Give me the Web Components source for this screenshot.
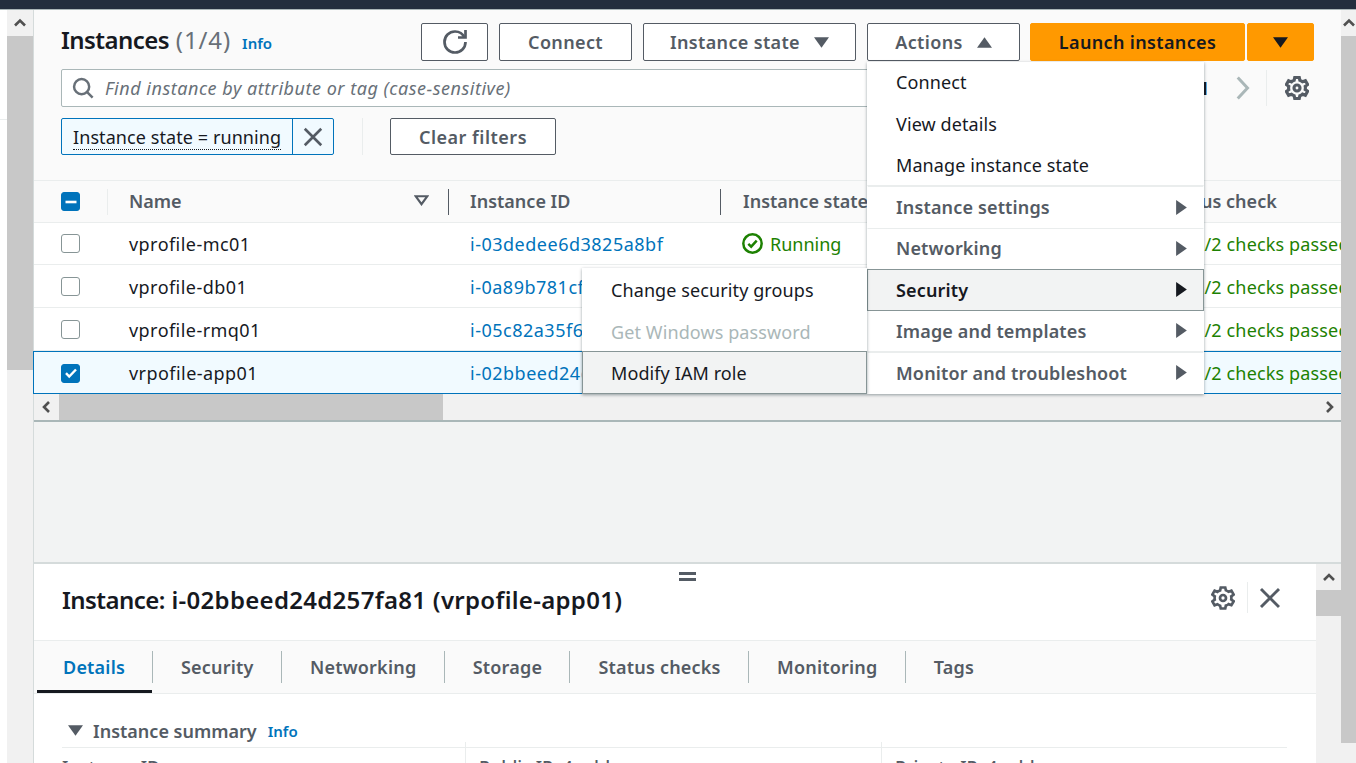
<!DOCTYPE html>
<html><head><meta charset="utf-8">
<style>
html,body{margin:0;padding:0;height:763px;overflow:hidden;background:#fff;font-family:"Noto Sans","Open Sans",sans-serif;color:#16191f}
</style></head>
<body>
<ec2-console></ec2-console>
<script>
const ICONS={
 refresh:'<path d="M10 5h5V0"/><path d="M15 8a6.96 6.96 0 0 1-7 7 6.96 6.96 0 0 1-7-7 6.96 6.96 0 0 1 7-7 6.87 6.87 0 0 1 6.3 4"/>',
 search:'<circle cx="7" cy="7" r="5.5"/><path d="m11 11 4 4"/>',
 close:'<path d="m2 2 12 12M14 2 2 14"/>',
 gear:'<path d="M13.6 8c0-.4 0-.7-.1-1.1l1.6-1.2-1.5-2.6-1.9.7c-.5-.4-1.1-.8-1.8-1L9.5 1h-3l-.4 1.9c-.7.2-1.3.5-1.8 1L2.4 3.1.9 5.7l1.6 1.2c-.1.4-.1.7-.1 1.1s0 .7.1 1.1L.9 10.3l1.5 2.6 1.9-.7c.5.4 1.1.8 1.8 1l.4 1.8h3l.4-1.9c.7-.2 1.3-.5 1.8-1l1.9.7 1.5-2.6-1.6-1.2c.1-.4.1-.7.1-1.1Z"/><circle cx="8" cy="8" r="2"/>',
 ok:'<circle cx="8" cy="8" r="7"/><path d="m4.8 8.2 2.2 2.2 4.2-4.6"/>',
 right:'<path d="m4.5 1 6.5 7-6.5 7"/>'
};
class Ec2Icon extends HTMLElement{
 connectedCallback(){
  const s=this.getAttribute('size')||16, w=this.getAttribute('stroke')||2, n=this.getAttribute('name');
  this.attachShadow({mode:'open'}).innerHTML=`<style>:host{display:inline-flex;flex:none;color:inherit}svg{display:block;fill:none;stroke:currentColor;stroke-width:${w}}</style><svg width="${s}" height="${s}" viewBox="0 0 16 16">${ICONS[n]}</svg>`;
 }
}
customElements.define('ec2-icon',Ec2Icon);

class Ec2Caret extends HTMLElement{
 connectedCallback(){
  const d=this.getAttribute('dir')||'down';
  const p={down:'M0 0h14L7 10z',up:'M0 10h14L7 0z',right:'M0 0l10 7-10 7z',hollow:'M1.5 1h11L7 8.5z'}[d];
  const vb=d==='right'?'0 0 10 14':'0 0 14 10';
  const wd=d==='right'?11:15,h=d==='right'?15:11;
  const paint=d==='hollow'?'fill:none;stroke:currentColor;stroke-width:2':'fill:currentColor';
  this.attachShadow({mode:'open'}).innerHTML=`<style>:host{display:inline-flex;flex:none}path{${paint}}</style><svg width="${wd}" height="${h}" viewBox="${vb}" style="display:block"><path d="${p}"/></svg>`;
 }
}
customElements.define('ec2-caret',Ec2Caret);

class Ec2Button extends HTMLElement{
 connectedCallback(){
  this.attachShadow({mode:'open'}).innerHTML=`<style>
  :host{display:inline-flex;box-sizing:border-box;height:38px;align-items:center;justify-content:center;gap:14px;border:1px solid #545b64;border-radius:2px;background:#fff;color:#545b64;font-size:18px;font-weight:600;letter-spacing:.35px;white-space:nowrap}
  :host([primary]){background:#f90;border-color:#f90;color:#16191f}
  </style><slot></slot>`;
 }
}
customElements.define('ec2-button',Ec2Button);

class Ec2Menu extends HTMLElement{
 connectedCallback(){
  this.attachShadow({mode:'open'}).innerHTML=`<style>
  :host{display:flex;flex-direction:column;position:absolute;box-sizing:border-box;background:#fff;box-shadow:0 1px 3px rgba(0,28,36,.4);z-index:5}
  </style><slot></slot>`;
 }
}
customElements.define('ec2-menu',Ec2Menu);

class Ec2MenuItem extends HTMLElement{
 connectedCallback(){
  this.attachShadow({mode:'open'}).innerHTML=`<style>
  :host{flex:1 1 0;display:flex;align-items:center;justify-content:space-between;box-sizing:border-box;padding:0 16px 0 28px;font-size:18px;letter-spacing:.1px;color:#16191f;border:1px solid transparent;border-top-color:var(--sep,transparent);margin-top:-1px;white-space:nowrap}
  :host(:first-child){margin-top:0}
  :host([group]){font-weight:600;letter-spacing:.15px;color:#545b64;--sep:#eaeded}
  :host([thick]){border-top:2px solid #eaeded}
  :host([sel]){background:#f2f3f3;color:#16191f;border:1px solid #879596;z-index:1}
  :host([dis]){color:#aab7b8}
  span{margin-bottom:var(--pb,1px)}
  </style><span><slot></slot></span><slot name="end"></slot>`;
 }
}
customElements.define('ec2-menu-item',Ec2MenuItem);

class Ec2Check extends HTMLElement{
 connectedCallback(){
  const st=this.getAttribute('state');
  let inner='';
  if(st==='on')inner='<svg width="16" height="16" viewBox="0 0 16 16"><path d="m3 8.2 3.2 3.3L13 4.5" fill="none" stroke="#fff" stroke-width="2.4"/></svg>';
  if(st==='mixed')inner='<svg width="16" height="16" viewBox="0 0 16 16"><path d="M2.5 8h11" fill="none" stroke="#fff" stroke-width="2.6"/></svg>';
  this.attachShadow({mode:'open'}).innerHTML=`<style>
  :host{display:inline-flex;box-sizing:border-box;width:19px;height:19px;align-items:center;justify-content:center;border:1px solid #879596;border-radius:3px;background:#fff;flex:none}
  :host([state=on]),:host([state=mixed]){background:#0073bb;border-color:#0073bb}
  </style>${inner}`;
 }
}
customElements.define('ec2-check',Ec2Check);

class Ec2Row extends HTMLElement{
 connectedCallback(){
  const [name,id,state,status]=[this.getAttribute('name'),this.getAttribute('iid'),this.getAttribute('st'),this.getAttribute('status')];
  const on=this.hasAttribute('selected');
  this.attachShadow({mode:'open'}).innerHTML=`<style>
  :host{display:grid;grid-template-columns:73px 341px 272px 424px 1fr;box-sizing:border-box;height:43px;align-items:center;border-bottom:1px solid #eaeded;background:#fff;font-size:18px;white-space:nowrap;overflow:hidden;padding-top:1px}
  :host([first]){height:42px;padding-top:0}
  :host([selected]){background:#f1faff;border:1px solid #0073bb;border-right:0;margin-left:-1px;padding-top:1px}
  .c{padding-left:27px;display:flex}
  .n{padding-left:22px;letter-spacing:.45px}
  .id{padding-left:22px;color:#0073bb;letter-spacing:.5px}
  .s{padding-left:22px;color:#1d8102;display:flex;align-items:center;gap:7px}
  .st{padding-left:22px;color:#1d8102;display:flex;align-items:center;gap:7px;letter-spacing:.15px}
  </style>
  <div class="c"><ec2-check ${on?'state="on"':''}></ec2-check></div>
  <div class="n">${name}</div><div class="id">${id}</div>
  <div class="s"><ec2-icon name="ok" size="21" stroke="1.9"></ec2-icon>${state}</div>
  <div class="st"><ec2-icon name="ok" size="21" stroke="1.9"></ec2-icon>${status}</div>`;
 }
}
customElements.define('ec2-row',Ec2Row);

class Ec2Tabs extends HTMLElement{
 connectedCallback(){
  const tabs=['Details','Security','Networking','Storage','Status checks','Monitoring','Tags'];
  this.attachShadow({mode:'open'}).innerHTML=`<style>
  :host{display:flex;flex:none;box-sizing:border-box;height:53px;background:#fafafa;border-bottom:1px solid #eaeded;padding:10px 0 0 3px;font-size:18px;font-weight:600;letter-spacing:.2px;color:#545b64;white-space:nowrap}
  .t{height:32px;display:flex;align-items:center;padding:0 27.3px 0 28px;border-left:1px solid #aab7b8;position:relative}
  .t:first-of-type{border-left:0;padding-left:26px;padding-right:27px;color:#0073bb}
  .t:first-of-type::after{content:"";position:absolute;left:0;right:0;top:39px;height:3px;background:#16191f}
  </style>${tabs.map(t=>`<div class="t">${t}</div>`).join('')}`;
 }
}
customElements.define('ec2-tabs',Ec2Tabs);

class Ec2SplitPanel extends HTMLElement{
 connectedCallback(){
  this.attachShadow({mode:'open'}).innerHTML=`<style>
  :host{display:flex;flex:1;min-height:0;background:#fff;border-top:2px solid #d5dbdb;position:relative}
  .body{flex:1;min-width:0;display:flex;flex-direction:column}
  .handle{position:absolute;left:645px;top:8px;width:17px;height:9px;border-top:3px solid #545b64;border-bottom:3px solid #545b64;box-sizing:border-box}
  .head{height:77px;flex:none;box-sizing:border-box;border-bottom:1px solid #eaeded;display:flex;align-items:center;justify-content:space-between;padding:0 34px 5px 28px}
  h2{margin:0;font-size:24px;font-weight:600;letter-spacing:.3px;color:#16191f;white-space:nowrap}
  h2 span{letter-spacing:-.55px}
  .tools{display:flex;align-items:center;color:#545b64;margin-top:-4px}
  .sep{width:1px;height:31px;background:#eaeded;margin:0 10px 0 12px}
  .sum{display:flex;flex:none;align-items:center;margin:25px 0 0 34px;font-size:18px;font-weight:600;color:#545b64;height:24px}
  .sum ec2-caret{margin-right:10px;color:#545b64;margin-bottom:2px}
  .info{color:#0073bb;font-size:15px;margin-left:11px}
  .cols{display:grid;flex:none;grid-template-columns:403px 416px 1fr;margin:4px 29px 0 28px;border-top:1px solid #eaeded;font-size:18px;font-weight:500;color:#545b64;white-space:nowrap;height:40px}
  .cols div{padding:7px 0 0 13px;border-left:1px solid #eaeded;position:relative}
  .cols div:first-child{padding-left:0;border:0}
  .cols div:not(:first-child)::before{content:"";position:absolute;left:-1px;top:-6px;width:1px;height:6px;background:#eaeded}
  .bar{width:25px;background:#f1f1f1;display:flex;flex-direction:column;flex:none}
  .arr{height:26px;display:flex;align-items:center;justify-content:center;background:#f1f1f1}
  .th{height:26px;background:#c8c8c8}
  </style>
  <div class="body">
   <div class="handle"></div>
   <div class="head"><h2><span>Instance:</span> i-02bbeed24d257fa81 (vrpofile-app01)</h2>
    <div class="tools"><ec2-icon name="gear" size="24" stroke="1.8"></ec2-icon><div class="sep"></div><ec2-icon name="close" size="24" stroke="1.9"></ec2-icon></div></div>
   <ec2-tabs></ec2-tabs>
   <div class="sum"><ec2-caret dir="down"></ec2-caret>Instance summary<span class="info">Info</span></div>
   <div class="cols"><div>Instance ID</div><div>Public IPv4 address</div><div>Private IPv4 addresses</div></div>
  </div>
  <div class="bar"><div class="arr"><svg width="14" height="10" viewBox="0 0 14 10"><path d="m2 8 5-5 5 5" fill="none" stroke="#505050" stroke-width="2.6"/></svg></div><div class="th"></div></div>`;
 }
}
customElements.define('ec2-split-panel',Ec2SplitPanel);

class Ec2Console extends HTMLElement{
 connectedCallback(){
  const arrow=d=>`<svg width="14" height="14" viewBox="0 0 14 14"><path d="${d}" fill="none" stroke="#505050" stroke-width="2.6"/></svg>`;
  this.attachShadow({mode:'open'}).innerHTML=`<style>
  :host{display:flex;flex-direction:column;height:763px;overflow:hidden}
  .top{height:9px;background:#232f3e;border-bottom:1px solid #aab7b8;flex:none}
  .app{flex:1;display:flex;min-height:0}
  .strip{width:7px;flex:none;background:#fff;position:relative}
  .strip i{position:absolute;left:0;right:0;top:109px;height:1px;background:#eaeded}
  .lbar{width:26px;flex:none;background:#f1f1f1;border-right:1px solid #d5dbdb;display:flex;flex-direction:column}
  .up{height:26px;display:flex;align-items:center;justify-content:center;flex:none}
  .lth{height:334px;background:#c8c8c8;flex:none}
  .rbar{width:15px;flex:none;background:#f1f1f1;display:flex;flex-direction:column}
  .rup{height:26px;flex:none;display:flex;align-items:center;justify-content:center;overflow:hidden}
  .rth{height:707px;background:#c8c8c8;flex:none}
  main{flex:1;min-width:0;display:flex;flex-direction:column;position:relative;background:#f2f3f3}
  .hdr{height:170px;box-sizing:border-box;background:#fafafa;padding:13px 27px 0 27px;flex:none}
  .r1{display:flex;align-items:center;height:38px}
  h1{margin:-5px 0 0;font-size:24px;font-weight:600;letter-spacing:-.55px;color:#16191f;white-space:nowrap}
  h1 span{font-weight:400;color:#687078;letter-spacing:.9px;margin-left:1px}
  .info{color:#0073bb;font-size:15px;font-weight:600;margin-left:11px;margin-top:2px}
  .acts{margin-left:auto;display:flex;align-items:center;gap:11px}
  .r2{display:flex;align-items:center;height:38px;margin-top:8px}
  .search{box-sizing:border-box;height:38px;width:1120px;flex:none;background:#fff;border:1px solid #aab7b8;border-radius:2px;display:flex;align-items:center;padding-left:10px;gap:11px;color:#687078;font-style:italic;font-size:18px;letter-spacing:.52px;white-space:nowrap}
  .pg{display:flex;align-items:center;margin-left:auto;color:#aab7b8}
  .pnum{color:#16191f;font-size:18px;font-weight:800;margin-right:22px}
  .pgsep{width:1px;height:36px;background:#eaeded;margin:0 18px 0 11px}
  .gear{color:#545b64;display:flex;margin-right:5px}
  .r3{display:flex;align-items:center;height:37px;margin-top:11px}
  .chip{box-sizing:border-box;height:37px;width:273px;display:flex;background:#f1faff;border:1px solid #0073bb;border-radius:2px;font-size:18px;letter-spacing:.08px;white-space:nowrap}
  .chip b{font-weight:400;width:231px;box-sizing:border-box;padding:6px 0 0 11px;border-right:1px solid #0073bb;display:block}
  .chip b u{text-decoration:none;border-bottom:1px dotted #16191f;display:inline-block;line-height:23px}
  .chip span{flex:1;display:flex;align-items:center;justify-content:center;color:#545b64}
  .rsep{width:1px;height:37px;background:#eaeded;margin:0 27px 0 28px}
  .tbl{flex:none;background:#fff;position:relative}
  .thead{display:grid;grid-template-columns:73px 341px 272px 424px 1fr;box-sizing:border-box;height:43px;align-items:center;background:#fafafa;border-top:1px solid #eaeded;border-bottom:1px solid #eaeded;font-size:18px;font-weight:600;color:#545b64;white-space:nowrap;overflow:hidden}
  .thead>div{height:26px;display:flex;align-items:center;padding:0 0 2px 21px;box-sizing:border-box;border-left:1px solid #545b64}
  .thead>div:first-child{padding:0 0 0 27px;border:0}
  .thead>div:nth-child(2){border-left-color:#eaeded;justify-content:space-between;padding-right:19px}
  .thead>div:nth-child(4){padding-left:22px}
  .hs{flex:none;height:28px;box-sizing:border-box;display:flex;background:#f1f1f1;border-bottom:2px solid #aab7b8}
  .hs .a{width:25px;flex:none;display:flex;align-items:center;justify-content:center}
  .hs .t{width:384px;background:#c8c8c8;flex:none}
  .hs .a:last-child{margin-left:auto}
  .gap{height:140px;flex:none}
  </style>
  <div class="top"></div>
  <div class="app">
   <div class="strip"><i></i></div>
   <div class="lbar"><div class="up">${arrow('m2 9.5 5-5 5 5')}</div><div class="lth"></div></div>
   <main>
    <div class="hdr">
     <div class="r1"><h1>Instances <span>(1/4)</span></h1><span class="info">Info</span>
      <div class="acts">
       <ec2-button style="width:67px"><ec2-icon name="refresh" size="24" stroke="1.8"></ec2-icon></ec2-button>
       <ec2-button style="width:133px">Connect</ec2-button>
       <ec2-button style="width:213px">Instance state<ec2-caret dir="down"></ec2-caret></ec2-button>
       <ec2-button style="width:153px">Actions<ec2-caret dir="up"></ec2-caret></ec2-button>
       <ec2-button primary style="width:215px;margin-left:-1px">Launch instances</ec2-button>
       <ec2-button primary style="width:67px;margin-left:-9px"><ec2-caret dir="down"></ec2-caret></ec2-button>
      </div>
     </div>
     <div class="r2"><div class="search"><ec2-icon name="search" size="22" stroke="1.8"></ec2-icon>Find instance by attribute or tag (case-sensitive)</div>
      <div class="pg"><span class="pnum">1</span><ec2-icon name="right" size="24" stroke="2"></ec2-icon><div class="pgsep"></div><span class="gear"><ec2-icon name="gear" size="24" stroke="2.1"></ec2-icon></span></div>
     </div>
     <div class="r3"><div class="chip"><b><u>Instance state = running</u></b><span><ec2-icon name="close" size="22" stroke="1.9"></ec2-icon></span></div><div class="rsep"></div><ec2-button style="width:166px;height:37px;letter-spacing:.5px">Clear filters</ec2-button></div>
    </div>
    <div class="tbl">
     <div class="thead"><div><ec2-check state="mixed"></ec2-check></div><div>Name<ec2-caret dir="hollow" style="color:#545b64"></ec2-caret></div><div>Instance ID</div><div>Instance state</div><div>Status check</div></div>
     <ec2-row first name="vprofile-mc01" iid="i-03dedee6d3825a8bf" st="Running" status="2/2 checks passed"></ec2-row>
     <ec2-row name="vprofile-db01" iid="i-0a89b781cf2d6e104" st="Running" status="2/2 checks passed"></ec2-row>
     <ec2-row name="vprofile-rmq01" iid="i-05c82a35f6b1d7e09" st="Running" status="2/2 checks passed"></ec2-row>
     <ec2-row selected name="vrpofile-app01" iid="i-02bbeed24d257fa81" st="Running" status="2/2 checks passed"></ec2-row>
    </div>
    <div class="hs"><div class="a">${arrow('m9 2-5 5 5 5')}</div><div class="t"></div><div class="a">${arrow('m5 2 5 5-5 5')}</div></div>
    <div class="gap"></div>
    <ec2-split-panel></ec2-split-panel>
    <ec2-menu style="left:833px;top:52px;width:337px;height:332px">
     <ec2-menu-item style="--pb:3px">Connect</ec2-menu-item>
     <ec2-menu-item style="--pb:1px">View details</ec2-menu-item>
     <ec2-menu-item style="--pb:0px">Manage instance state</ec2-menu-item>
     <ec2-menu-item style="--pb:1px" group thick>Instance settings<ec2-caret slot="end" dir="right"></ec2-caret></ec2-menu-item>
     <ec2-menu-item style="--pb:1px" group>Networking<ec2-caret slot="end" dir="right"></ec2-caret></ec2-menu-item>
     <ec2-menu-item style="--pb:-1px" group sel>Security<ec2-caret slot="end" dir="right"></ec2-caret></ec2-menu-item>
     <ec2-menu-item style="--pb:-1px" group>Image and templates<ec2-caret slot="end" dir="right"></ec2-caret></ec2-menu-item>
     <ec2-menu-item style="--pb:-1px" group thick>Monitor and troubleshoot<ec2-caret slot="end" dir="right"></ec2-caret></ec2-menu-item>
    </ec2-menu>
    <ec2-menu style="left:548px;top:258px;width:285px;height:126px">
     <ec2-menu-item style="--pb:-1px">Change security groups</ec2-menu-item>
     <ec2-menu-item style="--pb:-1px" dis>Get Windows password</ec2-menu-item>
     <ec2-menu-item style="--pb:0px" sel>Modify IAM role</ec2-menu-item>
    </ec2-menu>
   </main>
   <div class="rbar"><div class="rup">${arrow('m2 9.5 5-5 5 5')}</div><div class="rth"></div></div>
  </div>`;
 }
}
customElements.define('ec2-console',Ec2Console);
</script>
</body></html>
